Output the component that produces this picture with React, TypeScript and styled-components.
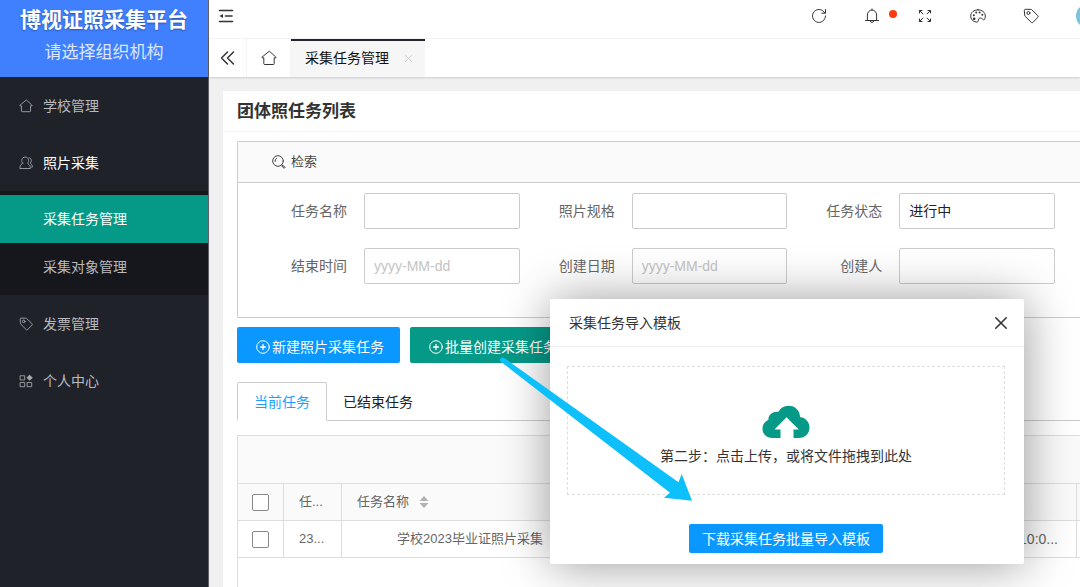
import React from "react";
import styled, { createGlobalStyle, css } from "styled-components";

const GlobalStyle = createGlobalStyle`
  * { box-sizing: border-box; }
  body {
    margin: 0;
    background: #f0f0f0;
    color: #333;
    font: 14px/20px "Liberation Sans", "Noto Sans CJK SC", sans-serif;
  }
  button, input, select { font: inherit; color: inherit; margin: 0; padding: 0; }
  button { border: 0; background: none; cursor: pointer; }
  a { color: inherit; text-decoration: none; }
  ul { list-style: none; margin: 0; padding: 0; }
`;

/* ---------- icons ---------- */

const Glyph = styled.svg<{ $size?: number; $weight?: number }>`
  display: block;
  flex: none;
  width: ${(p) => p.$size ?? 16}px;
  height: ${(p) => p.$size ?? 16}px;
  fill: none;
  stroke: currentColor;
  stroke-width: ${(p) => p.$weight ?? 1};
  stroke-linecap: round;
  stroke-linejoin: round;
`;

type IconProps = { size?: number };

const HomeIcon = ({ size }: IconProps) => (
  <Glyph $size={size} viewBox="0 0 16 16" aria-hidden="true">
    <path d="M8 1.4 1 7.2c-.3.3-.1.6.2.6h1.6v5.9c0 .5.3.8.8.8h8.8c.5 0 .8-.3.8-.8V7.800h1.600c.3 0 .5-.3.2-.6z" />
  </Glyph>
);

const UserIcon = () => (
  <Glyph $size={14} viewBox="0 0 16 16" aria-hidden="true">
    <path d="M4.200 8.200C3 7 2.900 5.300 3.200 4.200 3.700 2.300 5.200 1.200 7 1.200s3.400 1.100 3.800 3c.3 1.300.1 2.800-1 4 .1 1 3.200 1.500 3.200 5.300v.8H1v-.8c0-3.800 3.100-4.300 3.200-5.300z" />
    <path d="M11.500 2c1.800.4 2.700 1.700 2.600 3.300 0 1.200-.5 2-1.200 2.700.2.900 2.400 1.400 2.400 4.700h-1" />
  </Glyph>
);

const TagIcon = ({ size }: IconProps) => (
  <Glyph $size={size} viewBox="0 0 16 16" aria-hidden="true">
    <path d="M1.300 2.300c0-.6.4-1 1-1l5.600.1c.4 0 .7.1 1 .4l6 6c.4.4.4 1 0 1.400l-5.100 5.300c-.4.4-1 .4-1.400 0l-6.100-6c-.3-.3-.4-.6-.5-1z" />
    <circle cx="5.400" cy="5" r="1.500" />
  </Glyph>
);

const AppsIcon = () => (
  <Glyph $size={14} viewBox="0 0 16 16" aria-hidden="true">
    <rect x="1.700" y="2" width="4.800" height="4.800" />
    <rect x="1.700" y="9.700" width="4.800" height="4.800" />
    <rect x="9.700" y="9.700" width="4.800" height="4.800" />
    <path d="M12.100.8 15.700 4.300 12.100 7.800 8.600 4.300z" fill="currentColor" stroke="none" />
  </Glyph>
);

const FoldIcon = () => (
  <Glyph $weight={1.6} viewBox="0 0 16 16" aria-hidden="true">
    <path d="M1.500 2.500h13M7.500 8H14M1.500 13.500h13" />
    <path d="M1.500 8 5 5.900v4.200z" fill="currentColor" stroke="none" />
  </Glyph>
);

const RefreshIcon = () => (
  <Glyph viewBox="0 0 16 16" aria-hidden="true">
    <path d="M13.700 4.800A6.500 6.500 0 1 0 14.500 8M14.500 1.500v3.700h-3.700" />
  </Glyph>
);

const BellIcon = () => (
  <Glyph viewBox="0 0 16 16" aria-hidden="true">
    <path d="M8 1v.9M3.400 12.500V7a4.600 5 0 0 1 9.200 0v5.500M1.500 12.500h13M6.300 13.200a1.800 1.800 0 0 0 3.400 0" />
  </Glyph>
);

const ExpandIcon = () => (
  <Glyph $size={14} viewBox="0 0 14 14" aria-hidden="true">
    <path d="M1.500 4V1.500H4M1.700 1.700l3.200 3.200M10 1.500h2.500V4M12.300 1.700 9.100 4.900M1.500 10v2.500H4M1.700 12.300l3.200-3.200M10 12.500h2.500V10M12.300 12.300 9.100 9.100" />
  </Glyph>
);

const PaletteIcon = () => (
  <Glyph viewBox="0 0 16 16" aria-hidden="true">
    <path d="M8 1.800c4 0 7.300 2.500 7.300 6.200 0 1.800-.5 3.700-1.400 3.900-1 .2-1.600-1.900-3.500-1.900-1.300 0-1.900.8-2 1.900-.1 1.300-.5 2.500-2.100 2.200C3 13.600.700 11.100.700 8.200.700 4.300 4 1.800 8 1.800z" />
    <g fill="currentColor" stroke="none">
      <circle cx="4.200" cy="10.700" r="1.300" />
      <circle cx="3.800" cy="7.200" r="1" />
      <circle cx="6.200" cy="4.600" r="1" />
      <circle cx="9.600" cy="4.400" r="1" />
      <circle cx="12.300" cy="6.800" r="1" />
    </g>
  </Glyph>
);

const DoubleLeftIcon = () => (
  <Glyph $weight={1.5} viewBox="0 0 16 16" aria-hidden="true">
    <path d="M7.500 2 1.500 8l6 6M13.500 2 7.500 8l6 6" />
  </Glyph>
);

const SearchIcon = () => (
  <Glyph viewBox="0 0 16 16" aria-hidden="true">
    <circle cx="7" cy="7" r="5.300" />
    <path d="M4 7.500a3 3 0 0 1 1.600-3.200M11 11l.8.8" />
    <path d="m11.900 11.500 2.300 1.800-1 1-2.200-2z" />
  </Glyph>
);

const CloseIcon = ({ size, weight }: { size: number; weight?: number }) => (
  <Glyph $size={size} $weight={weight} viewBox="0 0 12 12" aria-hidden="true">
    <path d="m1.500 1.500 9 9M10.500 1.500l-9 9" />
  </Glyph>
);

const AddIcon = () => (
  <Glyph $size={14} viewBox="0 0 14 14" aria-hidden="true">
    <circle cx="7" cy="7" r="6.300" />
    <path d="M4.500 7h5M7 4.500v5" strokeWidth="1.300" />
  </Glyph>
);

const SortIcon = () => (
  <svg width="10" height="12" viewBox="0 0 10 12" aria-hidden="true">
    <path d="M5 0l4.500 5h-9zM5 12 .5 7h9z" fill="#b2b2b2" />
  </svg>
);

const CloudIcon = () => (
  <svg width="48" height="34" viewBox="0 0 48 34" aria-hidden="true">
    <path
      fill="#059a88"
      d="M10.500 33C4.500 33 .5 29 .5 23.800c0-4.500 2.500-7.700 5.900-8.900-.3-5 4-9 10-8.100C18.500 2.700 22 .7 26.500.7c6.700 0 11.300 4.600 11.600 11.300 5.400.6 9.400 5 9.400 10.500C47.500 28.500 43 33 37 33h-5.500v-8.500h5.300L24.500 12.200 12.500 24.500H18.500V33z"
    />
  </svg>
);

/* ---------- shell ---------- */

const Shell = styled.div`
  position: relative;
  display: flex;
  min-height: 100vh;
  overflow: hidden;
`;

const Sidebar = styled.aside`
  flex: none;
  width: 209px;
  background: #20222a;
  border-right: 1px solid #5d5e64;
`;

const Brand = styled.div`
  height: 77px;
  padding-top: 4px;
  background: #4080ff;
  color: #fff;
  text-align: center;
  text-shadow: 0 1px 2px rgba(0, 0, 0, 0.35);
`;

const BrandName = styled.div`
  font-size: 21px;
  line-height: 32px;
  font-weight: 700;
`;

const BrandOrg = styled.a`
  display: block;
  padding-top: 2px;
  font-size: 17px;
  line-height: 30px;
  text-shadow: none;
  color: #dce8ff;
`;

const MenuLink = styled.a<{ $open?: boolean }>`
  display: flex;
  align-items: center;
  gap: 10px;
  height: 57px;
  padding-left: 19px;
  color: ${(p) => (p.$open ? "#fff" : "#b9babd")};
  svg { color: #a6a7aa; }
`;

const SubMenu = styled.ul`
  padding: 4px 0;
  background: #16171c;
`;

const SubLink = styled.a<{ $active?: boolean }>`
  display: block;
  padding-left: 43px;
  line-height: 48px;
  color: ${(p) => (p.$active ? "#fff" : "#b9babd")};
  background: ${(p) => (p.$active ? "#059a88" : "transparent")};
`;

const Main = styled.main`
  flex: 1;
  min-width: 0;
  display: flex;
  flex-direction: column;
`;

const TopBar = styled.header`
  display: flex;
  justify-content: space-between;
  height: 39px;
  padding: 0 1px 6px 9px;
  background: #fff;
  border-bottom: 1px solid #f4f4f4;
  overflow: hidden;
`;

const BarGroup = styled.div`
  display: flex;
  align-items: center;
`;

const BarButton = styled.button<{ $width?: number }>`
  position: relative;
  display: flex;
  align-items: center;
  justify-content: ${(p) => (p.$width ? "center" : "flex-start")};
  width: ${(p) => (p.$width ? `${p.$width}px` : "auto")};
  height: 32px;
  color: #333;
`;

const Dot = styled.span`
  position: absolute;
  top: 10px;
  right: 1px;
  width: 8px;
  height: 8px;
  border-radius: 50%;
  background: #ff3b10;
`;

const Avatar = styled.span`
  width: 24px;
  height: 24px;
  margin: 0 -21px 0 19px;
  border-radius: 50%;
  background: #7cc4dc;
`;

const PageTabs = styled.nav`
  position: relative;
  display: flex;
  height: 38px;
  background: #fff;
  box-shadow: 0 1px 2px rgba(0, 0, 0, 0.15);
`;

const TabControl = styled.button<{ $width: number }>`
  display: flex;
  align-items: center;
  justify-content: center;
  width: ${(p) => p.$width}px;
  border-right: 1px solid #f4f4f4;
  color: #333;
`;

const PageTab = styled.div`
  display: flex;
  align-items: center;
  gap: 15px;
  padding: 0 12px 0 14px;
  background: #f6f6f6;
  box-shadow: inset 0 2px #23252d;
  color: #111;
  button { color: #c6c6c6; }
`;

/* ---------- content ---------- */

const Card = styled.section`
  flex: 1;
  display: flex;
  flex-direction: column;
  margin: 14px 0 0 14px;
  background: #fff;
`;

const CardTitle = styled.h1`
  margin: 0;
  padding: 2px 0 0 14px;
  border-bottom: 1px solid #f4f4f4;
  font-size: 17px;
  line-height: 38px;
  font-weight: 700;
`;

const CardBody = styled.div`
  flex: 1;
  display: flex;
  flex-direction: column;
  padding: 9px 0 0 14px;
`;

const SearchPanel = styled.form`
  border: 1px solid #ccc;
  border-right: 0;
  border-radius: 2px 0 0 2px;
`;

const PanelHead = styled.h2`
  display: flex;
  align-items: center;
  gap: 4px;
  height: 41px;
  margin: 0;
  padding-left: 33px;
  border-bottom: 1px solid #ccc;
  background: #fafafa;
  font-size: 13px;
  font-weight: 400;
  color: #444;
`;

const FieldGrid = styled.div`
  display: grid;
  grid-template-columns: repeat(3, minmax(0, 1fr));
  row-gap: 19px;
  padding: 10px 25px 33px 14px;
`;

const Field = styled.div`
  display: flex;
  align-items: center;
`;

const FieldLabel = styled.label`
  flex: none;
  width: 112px;
  padding-right: 17px;
  text-align: right;
  color: #666;
`;

const control = css`
  flex: 1;
  min-width: 0;
  height: 36px;
  padding: 0 9px;
  border: 1px solid #ccc;
  border-radius: 2px;
  background: #fff;
  color: #222;
`;

const TextInput = styled.input`
  ${control}
  &::placeholder { color: #c4c4c4; opacity: 1; }
`;

const Select = styled.select`
  ${control}
  appearance: none;
`;

const Actions = styled.div`
  display: flex;
  gap: 10px;
  padding-top: 9px;
`;

const ActionButton = styled.button<{ $tone: "blue" | "green" }>`
  display: flex;
  align-items: center;
  gap: 2px;
  height: 36px;
  padding: 3px 16px 0 19px;
  border-radius: 2px;
  color: #fff;
  background: ${(p) => (p.$tone === "blue" ? "#0a97ff" : "#059a88")};
`;

const TaskTabs = styled.div`
  display: flex;
  height: 39px;
  margin-top: 19px;
  border-bottom: 1px solid #ccc;
`;

const TaskTab = styled.button<{ $active?: boolean }>`
  height: 39px;
  padding: 0 16px;
  color: #222;
  ${(p) =>
    p.$active &&
    css`
      border: 1px solid #ccc;
      border-bottom-color: #fff;
      border-radius: 2px 2px 0 0;
      background: #fff;
      color: #1e9fff;
    `}
`;

const TableBox = styled.div`
  flex: 1;
  margin-top: 14px;
  border: solid #ddd;
  border-width: 1px 0 0 1px;
`;

const TableTools = styled.div`
  height: 48px;
  border-bottom: 1px solid #ddd;
  background: #fafafa;
`;

const Table = styled.table`
  width: 100%;
  table-layout: fixed;
  border-collapse: separate;
  border-spacing: 0;
  color: #666;
`;

const Col = styled.col<{ $width?: number }>`
  width: ${(p) => (p.$width ? `${p.$width}px` : "auto")};
`;

const cell = css<{ $indent?: number }>`
  height: 37px;
  padding: 0 15px 0 ${(p) => p.$indent ?? 15}px;
  border: solid #ddd;
  border-width: 0 1px 1px 0;
  font-size: 13px;
  font-weight: 400;
  text-align: left;
  white-space: nowrap;
  overflow: hidden;
  &:last-child { padding: 0; border-right: 0; }
`;

const Th = styled.th`
  ${cell}
  background: #fafafa;
`;

const Td = styled.td<{ $end?: boolean }>`
  ${cell}
  ${(p) => p.$end && css`text-align: right; padding-right: 18px; font-size: 14px;`}
`;

const HeadSort = styled.span`
  display: flex;
  align-items: center;
  gap: 10px;
`;

const Check = styled.input.attrs({ type: "checkbox" })`
  appearance: none;
  display: block;
  width: 17px;
  height: 17px;
  border: 1px solid #888;
  border-radius: 2px;
  background: #fff;
`;

/* ---------- dialog ---------- */

const Dialog = styled.section`
  position: absolute;
  top: 299px;
  left: 550px;
  width: 474px;
  background: #fff;
  border-radius: 2px;
  box-shadow: 1px 1px 50px rgba(0, 0, 0, 0.4);
`;

const DialogHead = styled.header`
  display: flex;
  align-items: center;
  justify-content: space-between;
  height: 48px;
  padding: 0 16px 0 19px;
  border-bottom: 1px solid #eee;
`;

const DialogTitle = styled.h2`
  margin: 0;
  font-size: 14px;
  font-weight: 400;
`;

const DialogBody = styled.div`
  display: flex;
  flex-direction: column;
  align-items: center;
  padding: 19px 19px 11px 17px;
`;

const DropZone = styled.button`
  display: flex;
  flex-direction: column;
  align-items: center;
  gap: 7px;
  width: 100%;
  height: 129px;
  padding-top: 38px;
  border: 1px dashed #ddd;
`;

const DownloadButton = styled.button`
  height: 29px;
  margin-top: 29px;
  padding: 0 13px;
  border-radius: 2px;
  background: #0a97ff;
  color: #fff;
`;

const Pointer = styled.svg`
  position: absolute;
  top: 357px;
  left: 499px;
  width: 194px;
  height: 145px;
  pointer-events: none;
`;

type FieldSpec = { id: string; label: string; placeholder?: string; options?: string[] };

const fields: FieldSpec[] = [
  { id: "name", label: "任务名称" },
  { id: "spec", label: "照片规格" },
  { id: "state", label: "任务状态", options: ["进行中"] },
  { id: "end", label: "结束时间", placeholder: "yyyy-MM-dd" },
  { id: "created", label: "创建日期", placeholder: "yyyy-MM-dd" },
  { id: "creator", label: "创建人" },
];

export default function App() {
  return (
    <>
      <GlobalStyle />
      <Shell>
        <Sidebar>
          <Brand>
            <BrandName>博视证照采集平台</BrandName>
            <BrandOrg href="#org">请选择组织机构</BrandOrg>
          </Brand>
          <ul>
            <li><MenuLink href="#school"><HomeIcon size={14} />学校管理</MenuLink></li>
            <li>
              <MenuLink href="#photo" $open><UserIcon />照片采集</MenuLink>
              <SubMenu>
                <li><SubLink href="#tasks" $active>采集任务管理</SubLink></li>
                <li><SubLink href="#targets">采集对象管理</SubLink></li>
              </SubMenu>
            </li>
            <li><MenuLink href="#invoice"><TagIcon size={14} />发票管理</MenuLink></li>
            <li><MenuLink href="#me"><AppsIcon />个人中心</MenuLink></li>
          </ul>
        </Sidebar>

        <Main>
          <TopBar>
            <BarGroup>
              <BarButton aria-label="收起菜单"><FoldIcon /></BarButton>
            </BarGroup>
            <BarGroup>
              <BarButton $width={53} aria-label="刷新"><RefreshIcon /></BarButton>
              <BarButton $width={53} aria-label="消息"><BellIcon /><Dot /></BarButton>
              <BarButton $width={53} aria-label="全屏"><ExpandIcon /></BarButton>
              <BarButton $width={53} aria-label="主题"><PaletteIcon /></BarButton>
              <BarButton $width={53} aria-label="便签"><TagIcon /></BarButton>
              <Avatar />
            </BarGroup>
          </TopBar>

          <PageTabs>
            <TabControl $width={38} aria-label="向左"><DoubleLeftIcon /></TabControl>
            <TabControl $width={44} aria-label="首页"><HomeIcon size={16} /></TabControl>
            <PageTab>
              采集任务管理
              <button aria-label="关闭标签"><CloseIcon size={9} /></button>
            </PageTab>
          </PageTabs>

          <Card>
            <CardTitle>团体照任务列表</CardTitle>
            <CardBody>
              <SearchPanel>
                <PanelHead><SearchIcon />检索</PanelHead>
                <FieldGrid>
                  {fields.map((f) => (
                    <Field key={f.id}>
                      <FieldLabel htmlFor={f.id}>{f.label}</FieldLabel>
                      {f.options ? (
                        <Select id={f.id}>
                          {f.options.map((o) => <option key={o}>{o}</option>)}
                        </Select>
                      ) : (
                        <TextInput id={f.id} type="text" placeholder={f.placeholder} />
                      )}
                    </Field>
                  ))}
                </FieldGrid>
              </SearchPanel>

              <Actions>
                <ActionButton $tone="blue"><AddIcon />新建照片采集任务</ActionButton>
                <ActionButton $tone="green"><AddIcon />批量创建采集任务</ActionButton>
              </Actions>

              <TaskTabs>
                <TaskTab $active>当前任务</TaskTab>
                <TaskTab>已结束任务</TaskTab>
              </TaskTabs>

              <TableBox>
                <TableTools />
                <Table>
                  <colgroup>
                    <Col $width={46} />
                    <Col $width={58} />
                    <Col />
                    <Col $width={160} />
                    <Col $width={3} />
                  </colgroup>
                  <thead>
                    <tr>
                      <Th $indent={14}><Check aria-label="全选" /></Th>
                      <Th>任...</Th>
                      <Th><HeadSort>任务名称<SortIcon /></HeadSort></Th>
                      <Th />
                      <Th />
                    </tr>
                  </thead>
                  <tbody>
                    <tr>
                      <Td $indent={14}><Check aria-label="选择任务" /></Td>
                      <Td>23...</Td>
                      <Td $indent={55}>学校2023毕业证照片采集</Td>
                      <Td $end>10:0...</Td>
                      <Td />
                    </tr>
                  </tbody>
                </Table>
              </TableBox>
            </CardBody>
          </Card>
        </Main>

        <Dialog role="dialog" aria-labelledby="dialog-title">
          <DialogHead>
            <DialogTitle id="dialog-title">采集任务导入模板</DialogTitle>
            <button aria-label="关闭"><CloseIcon size={14} weight={1.3} /></button>
          </DialogHead>
          <DialogBody>
            <DropZone>
              <CloudIcon />
              第二步：点击上传，或将文件拖拽到此处
            </DropZone>
            <DownloadButton>下载采集任务批量导入模板</DownloadButton>
          </DialogBody>
        </Dialog>

        <Pointer viewBox="0 0 194 145" aria-hidden="true">
          <path d="M2 1Q4 0 6 1.500L179.500 125.300 182.700 117 193 143.700 165 140.700 171 135.700 1.500 4.500Q0 2.500 2 1z" fill="#0dc0fb" />
        </Pointer>
      </Shell>
    </>
  );
}
